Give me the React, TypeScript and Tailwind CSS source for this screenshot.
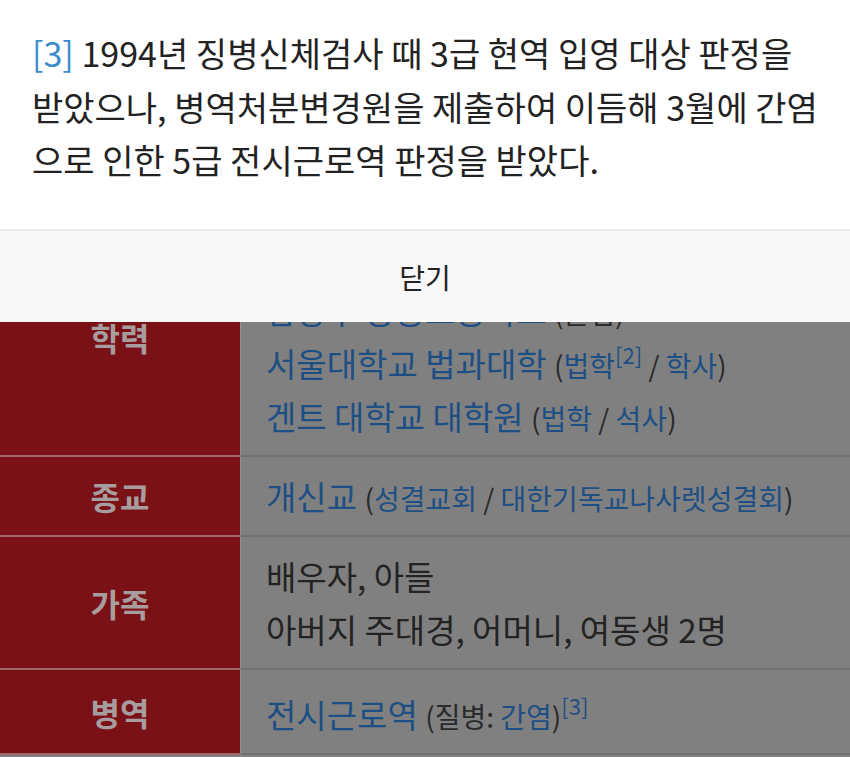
const font = { fontFamily: '"Noto Sans CJK KR", "Noto Sans", sans-serif' };

function Link({ children }: { children: React.ReactNode }) {
  return <span className="text-[#1d4f84]">{children}</span>;
}

// footnote marker, shifted up without touching the line box
function Note({ n }: { n: number }) {
  return <span className="text-[22px] text-[#1d4f84] relative -top-[13px] leading-none">[{n}]</span>;
}

function Row({
  label,
  tall,
  children,
}: {
  label: string;
  tall?: boolean;
  children: React.ReactNode;
}) {
  return (
    <div className="grid grid-cols-[240px_1fr]">
      <div className="bg-[#7a1117] border-b-2 border-[#a0686b] flex items-center justify-center text-[32px] font-bold text-[#a89d9e]">
        {label}
      </div>
      <div
        className={
          "bg-[#808080] border-b-2 border-l border-[#727272] border-l-[#9a8f90] pl-[25px] pb-[12px] text-[33px] leading-[53px] text-[#232323] " +
          (tall ? "pt-[18px]" : "pt-[13px]")
        }
      >
        {children}
      </div>
    </div>
  );
}

function Paren({ children }: { children: React.ReactNode }) {
  return <span className="text-[28px] leading-none text-[#2a2a2a]">{children}</span>;
}

export default function App() {
  return (
    <div className="relative h-[757px] w-[850px] overflow-hidden bg-[#808080]" style={font}>
      {/* infobox behind the dimmed backdrop */}
      <div className="mt-[218px]">
        <Row label="학력">
          <div>
            <Link>광동고등학교</Link> <Paren>(졸업)</Paren>
          </div>
          <div>
            <Link>남양주 광동고등학교</Link> <Paren>(졸업)</Paren>
          </div>
          <div>
            <Link>서울대학교 법과대학</Link>{" "}
            <Paren>
              (<Link>법학</Link>
              <Note n={2} /> / <Link>학사</Link>)
            </Paren>
          </div>
          <div>
            <Link>겐트 대학교 대학원</Link>{" "}
            <Paren>
              (<Link>법학</Link> / <Link>석사</Link>)
            </Paren>
          </div>
        </Row>
        <Row label="종교">
          <Link>개신교</Link>{" "}
          <Paren>
            (<Link>성결교회</Link> / <Link>대한기독교나사렛성결회</Link>)
          </Paren>
        </Row>
        <Row label="가족">
          <div>배우자, 아들</div>
          <div>아버지 주대경, 어머니, 여동생 2명</div>
        </Row>
        <Row label="병역" tall>
          <Link>전시근로역</Link>{" "}
          <Paren>
            (질병: <Link>간염</Link>)
          </Paren>
          <Note n={3} />
        </Row>
      </div>

      {/* footnote popup */}
      <div className="absolute top-0 left-0 right-0 z-10">
        <div className="bg-white h-[229px] pl-[32px] pr-[28px] pt-[26px] text-[34px] leading-[53.5px] text-[#222]">
          <span className="text-[#3b8ccc]">[3]</span> 1994년 징병신체검사 때 3급 현역 입영 대상 판정을
          받았으나, 병역처분변경원을 제출하여 이듬해 3월에 간염으로 인한 5급 전시근로역 판정을 받았다.
        </div>
        <div className="h-[93px] bg-[#f8f8f8] border-t-2 border-[#eeeeee] flex items-center justify-center text-[28px] text-[#222]">
          닫기
        </div>
      </div>
    </div>
  );
}
